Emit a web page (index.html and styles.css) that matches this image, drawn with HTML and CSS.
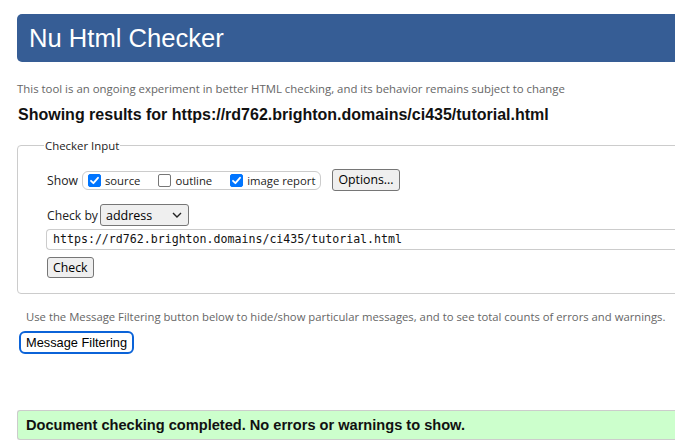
FILE: index.html
```html
<!DOCTYPE html>
<html>
<head>
<meta charset="utf-8">
<title>Nu Html Checker</title>
<link rel="stylesheet" href="styles.css">
</head>
<body>
<div class="page">
  <h1 class="banner">Nu Html Checker</h1>
  <p class="tagline">This tool is an ongoing experiment in better HTML checking, and its behavior remains subject to change</p>
  <h2 class="results">Showing results for https://rd762.brighton.domains/ci435/tutorial.html</h2>
  <fieldset class="input-box">
    <legend>Checker Input</legend>
    <div class="row show-row">
      <span class="lbl">Show</span>
      <span class="pill">
        <label class="opt"><span class="cb on"><svg viewBox="0 0 13 13" width="13" height="13"><path d="M3 6.8 L5.4 9.2 L10 3.8" fill="none" stroke="#fff" stroke-width="1.8" stroke-linecap="round" stroke-linejoin="round"/></svg></span>source</label>
        <label class="opt"><span class="cb"></span>outline</label>
        <label class="opt"><span class="cb on"><svg viewBox="0 0 13 13" width="13" height="13"><path d="M3 6.8 L5.4 9.2 L10 3.8" fill="none" stroke="#fff" stroke-width="1.8" stroke-linecap="round" stroke-linejoin="round"/></svg></span>image report</label>
      </span>
      <span class="btn options">Options...</span>
    </div>
    <div class="row by-row">
      <span class="lbl">Check by</span>
      <span class="select">address<svg viewBox="0 0 10 6" width="10" height="6"><path d="M1 1 L5 5 L9 1" fill="none" stroke="#222" stroke-width="1.4"/></svg></span>
    </div>
    <div class="url">https://rd762.brighton.domains/ci435/tutorial.html</div>
    <span class="btn check">Check</span>
  </fieldset>
  <p class="filter-note">Use the Message Filtering button below to hide/show particular messages, and to see total counts of errors and warnings.</p>
  <span class="btn filter">Message Filtering</span>
  <div class="success">Document checking completed. No errors or warnings to show.</div>
</div>
</body>
</html>
```

FILE: styles.css
```css
html, body {
  margin: 0;
  padding: 0;
  overflow: hidden;
  background: #fff;
}
body {
  font-family: "Open Sans", "Noto Sans", sans-serif;
  color: #000;
}
.page {
  width: 720px;
  padding: 14px 0 0 17px;
}
.banner {
  margin: 0;
  height: 48px;
  box-sizing: border-box;
  background: #365d95;
  color: #fff;
  border-radius: 5px 0 0 5px;
  font-family: "Liberation Sans", Arial, sans-serif;
  font-weight: normal;
  font-size: 25.6px;
  line-height: 48px;
  padding-left: 12px;
}
.tagline {
  margin: 19px 0 0 0;
  font-size: 11.4px;
  line-height: 16px;
  color: #666;
}
.results {
  margin: 9px 0 0 1px;
  font-family: "Liberation Sans", Arial, sans-serif;
  font-weight: bold;
  font-size: 16px;
  line-height: 18px;
  color: #111;
}
.input-box {
  margin: 14px 0 0 0;
  border: 1px solid #ccc;
  border-radius: 4px;
  padding: 8px 0 15px 29px;
  min-width: 0;
}
.input-box legend {
  padding: 0 1px;
  font-size: 11.4px;
  color: #222;
  margin-left: -3px;
}
.row {
  display: flex;
  align-items: center;
}
.lbl {
  font-size: 12.2px;
  color: #222;
}
.show-row {
  margin-top: 8px;
  height: 22px;
}
.pill {
  display: inline-flex;
  align-items: center;
  margin-left: 4px;
  height: 17px;
  border: 1px solid #ccc;
  border-radius: 6px;
  padding: 0 5px 0 5px;
}
.opt {
  display: inline-flex;
  align-items: center;
  font-size: 11.3px;
  color: #222;
  margin-right: 18px;
}
.opt:last-child { margin-right: 0; }
.cb {
  display: inline-block;
  width: 13px;
  height: 13px;
  box-sizing: border-box;
  border: 1px solid #767676;
  border-radius: 2px;
  margin-right: 4px;
  background: #fff;
}
.cb.on {
  background: #0075ff;
  border-color: #0075ff;
}
.cb svg { display: block; margin: -1px; }
.btn {
  display: inline-block;
  box-sizing: border-box;
  border: 1px solid #767676;
  border-radius: 3px;
  background: #efefef;
  font-size: 12px;
  color: #000;
  text-align: center;
}
.options {
  margin-left: 11px;
  height: 22px;
  line-height: 20px;
  padding: 0 5px;
  font-size: 12.3px;
}
.by-row {
  margin-top: 13px;
}
.select {
  display: inline-flex;
  align-items: center;
  justify-content: space-between;
  box-sizing: border-box;
  width: 89px;
  height: 22px;
  margin-left: 2px;
  border: 1px solid #767676;
  border-radius: 3px;
  background: #efefef;
  padding: 0 6px 0 5px;
  font-size: 12.5px;
  color: #000;
}
.url {
  margin: 3px 0 0 -1px;
  height: 21px;
  box-sizing: border-box;
  border: 1px solid #ccc;
  border-radius: 4px 0 0 4px;
  border-right: none;
  font-family: "DejaVu Sans Mono", monospace;
  font-size: 11.6px;
  line-height: 19px;
  padding-left: 6px;
  color: #111;
}
.check {
  margin-top: 7px;
  height: 21px;
  line-height: 19px;
  padding: 0 5px;
  font-size: 12.3px;
}
.filter-note {
  margin: 15px 0 0 9px;
  font-size: 11.3px;
  line-height: 16px;
  color: #666;
}
.filter {
  margin: 6px 0 0 2px;
  height: 23px;
  line-height: 19px;
  padding: 0 5px;
  background: #fff;
  border: 2px solid #0b63d8;
  border-radius: 6px;
  font-family: "Liberation Sans", Arial, sans-serif;
  font-size: 12.8px;
}
.success {
  margin-top: 56px;
  height: 30px;
  box-sizing: border-box;
  background: #ccffcc;
  border: 1px solid #ccc;
  border-right: none;
  border-radius: 3px 0 0 3px;
  padding-left: 8px;
  font-family: "Liberation Sans", Arial, sans-serif;
  font-weight: bold;
  font-size: 14.6px;
  line-height: 28px;
  color: #111;
}
```
